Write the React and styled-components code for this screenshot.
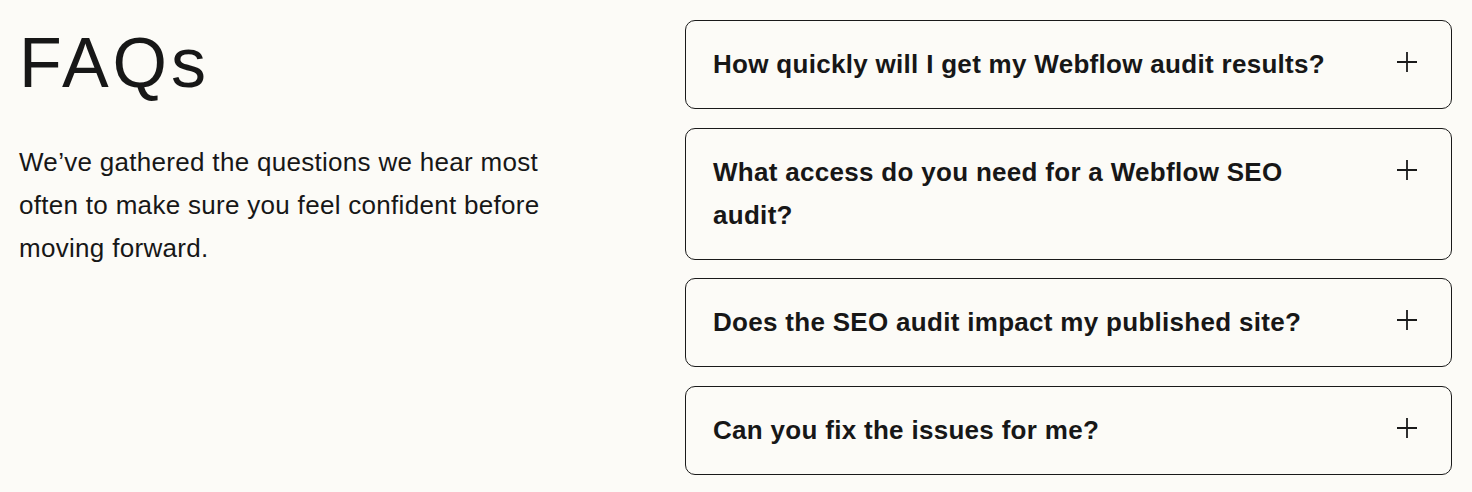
import React, { useState } from 'react';
import styled, { createGlobalStyle } from 'styled-components';

const GlobalStyle = createGlobalStyle`
  body {
    margin: 0;
    background: #fcfbf7;
    color: #171717;
    font-family: "Liberation Sans", Arial, sans-serif;
  }
`;

const faqs = [
    'How quickly will I get my Webflow audit results?',
    'What access do you need for a Webflow SEO audit?',
    'Does the SEO audit impact my published site?',
    'Can you fix the issues for me?',
];

function PlusIcon() {
    return (
        <svg width="22" height="22" viewBox="0 0 22 22" fill="none">
            <path d="M11 1v20M1 11h20" stroke="#1a1a1a" strokeWidth="1.8" />
        </svg>
    );
}

function FaqItem({ question }) {
    const [open, setOpen] = useState(false);
    return (
        <Card onClick={() => setOpen(!open)}>
            <Question>{question}</Question>
            <IconWrap $open={open}>
                <PlusIcon />
            </IconWrap>
        </Card>
    );
}

export default function App() {
    return (
        <>
            <GlobalStyle />
            <Section>
                <Intro>
                    <Title>FAQs</Title>
                    <Lead>
                        We’ve gathered the questions we hear most often to make sure you feel
                        confident before moving forward.
                    </Lead>
                </Intro>
                <List>
                    {faqs.map((q) => (
                        <FaqItem key={q} question={q} />
                    ))}
                </List>
            </Section>
        </>
    );
}

const Section = styled.section`
  display: grid;
  grid-template-columns: 1fr 767px;
  padding: 20px 20px 16px 19px;
`;

const Intro = styled.div`
  display: flex;
  flex-direction: column;
`;

const Title = styled.h2`
  margin: 0;
  padding-top: 8px;
  font-size: 70px;
  font-weight: 400;
  line-height: 1;
  letter-spacing: 4px;
`;

const Lead = styled.p`
  margin: 43px 0 0;
  max-width: 545px;
  font-size: 26px;
  line-height: 43px;
  letter-spacing: 0.3px;
`;

const List = styled.div`
  display: flex;
  flex-direction: column;
  gap: 18.5px;
`;

const Card = styled.div`
  display: flex;
  align-items: flex-start;
  justify-content: space-between;
  gap: 40px;
  padding: 22px 33px 22px 27px;
  border: 1px solid #1a1a1a;
  border-radius: 10px;
  cursor: pointer;
`;

const Question = styled.h3`
  margin: 0;
  max-width: 625px;
  font-size: 26px;
  font-weight: 700;
  line-height: 43px;
  letter-spacing: 0.3px;
`;

const IconWrap = styled.div`
  display: flex;
  margin-top: 8px;
  transform: rotate(${(p) => (p.$open ? '45deg' : '0deg')});
`;
